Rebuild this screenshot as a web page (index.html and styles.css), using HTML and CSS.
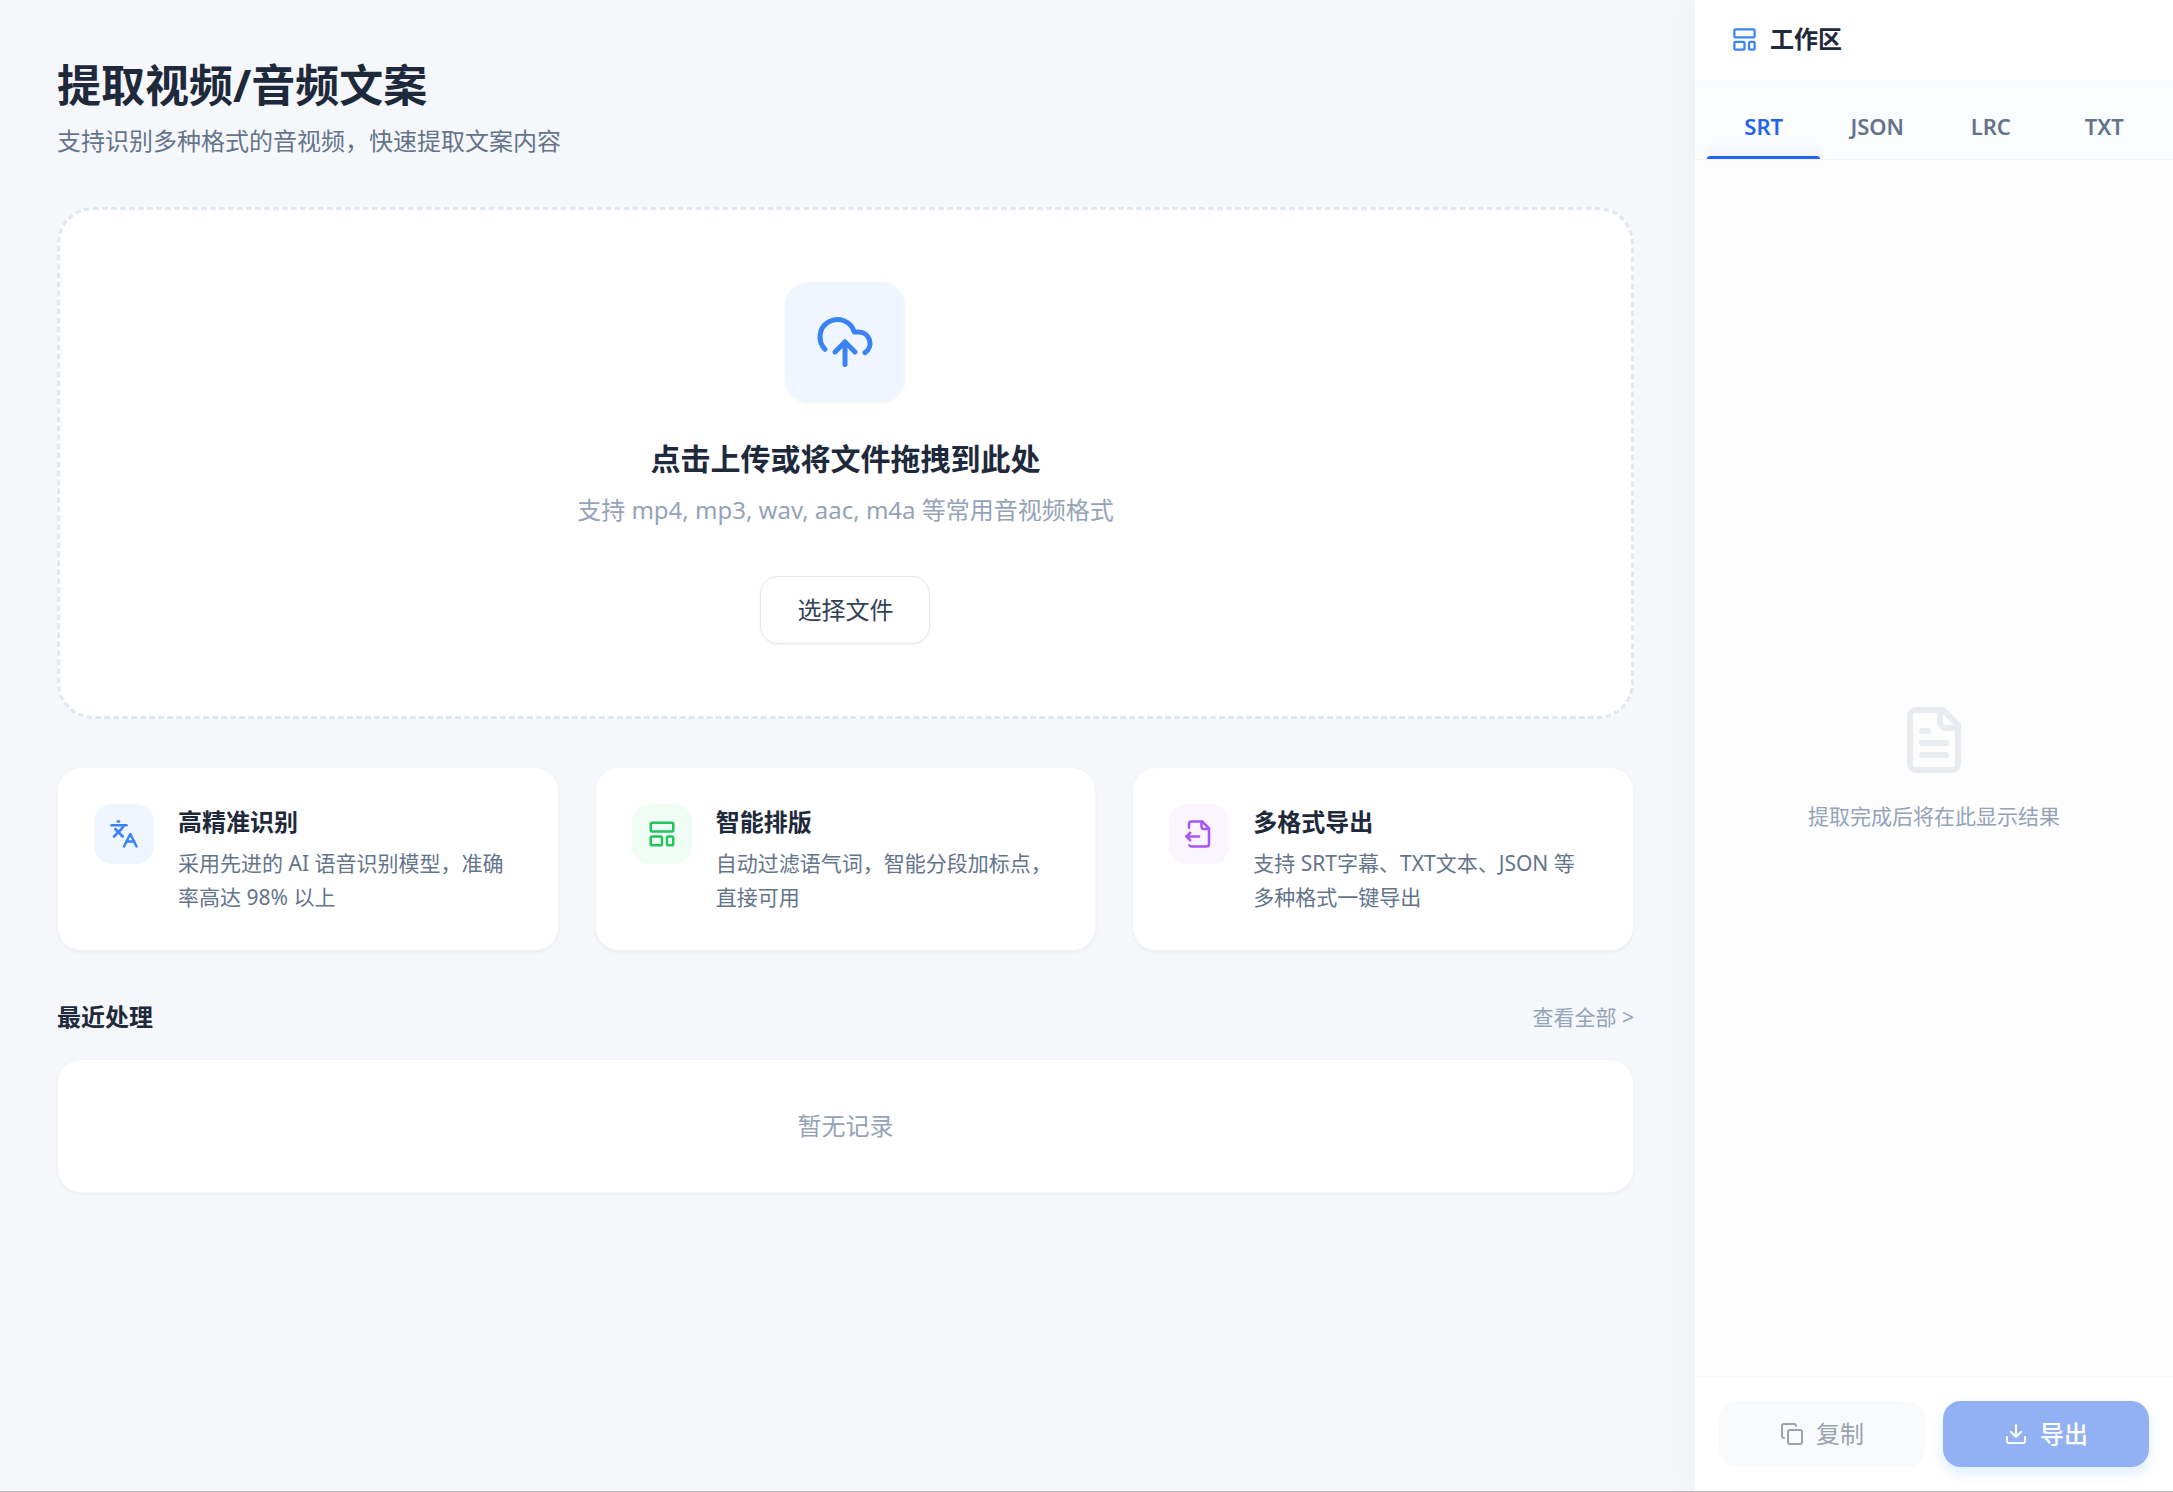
FILE: index.html
```html
<!DOCTYPE html>
<html lang="zh-CN">
  <head>
    <meta charset="UTF-8" />
    <meta name="viewport" content="width=device-width, initial-scale=1.0" />
    <title>提取视频/音频文案</title>
    <link rel="stylesheet" href="styles.css">
  </head>
  <body>
    <main class="main">
      <header class="page-header">
        <h1>提取视频/音频文案</h1>
        <p>支持识别多种格式的音视频，快速提取文案内容</p>
      </header>

      <section class="dropzone">
        <div class="upload-icon">
          <svg class="icon" viewBox="0 0 24 24">
            <path d="M12 12v9" />
            <path d="M4 14.899A7 7 0 1 1 15.71 8h1.79a4.5 4.5 0 0 1 2.5 8.242" />
            <path d="m16 16-4-4-4 4" />
          </svg>
        </div>
        <h2>点击上传或将文件拖拽到此处</h2>
        <p>支持 mp4, mp3, wav, aac, m4a 等常用音视频格式</p>
        <button type="button" class="select-btn">选择文件</button>
      </section>

      <section class="features">
        <article class="card feature">
          <div class="feature-icon blue">
            <svg class="icon" viewBox="0 0 24 24">
              <path d="M2 5h12" />
              <path d="M7 2h1" />
              <path d="m4 14 6-6 2-3" />
              <path d="m5 8 6 6" />
              <path d="m22 22-5-10-5 10" />
              <path d="M14 18h6" />
            </svg>
          </div>
          <div class="feature-text">
            <h3>高精准识别</h3>
            <p>采用先进的 AI 语音识别模型，准确率高达 98% 以上</p>
          </div>
        </article>

        <article class="card feature">
          <div class="feature-icon green">
            <svg class="icon" viewBox="0 0 24 24">
              <rect x="3" y="3" width="18" height="7" rx="1" />
              <rect x="3" y="14" width="9" height="7" rx="1" />
              <rect x="16" y="14" width="5" height="7" rx="1" />
            </svg>
          </div>
          <div class="feature-text">
            <h3>智能排版</h3>
            <p>自动过滤语气词，智能分段加标点，直接可用</p>
          </div>
        </article>

        <article class="card feature">
          <div class="feature-icon purple">
            <svg class="icon" viewBox="0 0 24 24">
              <path d="M14 2v4a2 2 0 0 0 2 2h4" />
              <path d="M4 7V4a2 2 0 0 1 2-2h8.5L20 7.5V20a2 2 0 0 1-2 2H6a2 2 0 0 1-1.7-1" />
              <path d="M2 14h10" />
              <path d="m5 11-3 3 3 3" />
            </svg>
          </div>
          <div class="feature-text">
            <h3>多格式导出</h3>
            <p>支持 SRT字幕、TXT文本、JSON 等多种格式一键导出</p>
          </div>
        </article>
      </section>

      <section class="recent">
        <div class="recent-header">
          <h3>最近处理</h3>
          <a href="#">查看全部 &gt;</a>
        </div>
        <div class="card empty-record">暂无记录</div>
      </section>
    </main>

    <aside class="workspace">
      <header class="workspace-header">
        <svg class="icon" viewBox="0 0 24 24">
          <rect x="3" y="3" width="18" height="7" rx="1" />
          <rect x="3" y="14" width="9" height="7" rx="1" />
          <rect x="16" y="14" width="5" height="7" rx="1" />
        </svg>
        <h2>工作区</h2>
      </header>

      <nav class="tabs">
        <button type="button" class="tab active">SRT</button>
        <button type="button" class="tab">JSON</button>
        <button type="button" class="tab">LRC</button>
        <button type="button" class="tab">TXT</button>
      </nav>

      <div class="result">
        <svg class="icon" viewBox="0 0 24 24">
          <path d="M15 2H6a2 2 0 0 0-2 2v16a2 2 0 0 0 2 2h12a2 2 0 0 0 2-2V7Z" />
          <path d="M14 2v4a2 2 0 0 0 2 2h4" />
          <path d="M10 9H8" />
          <path d="M16 13H8" />
          <path d="M16 17H8" />
        </svg>
        <p>提取完成后将在此显示结果</p>
      </div>

      <footer class="actions">
        <button type="button" class="action copy" disabled>
          <svg class="icon" viewBox="0 0 24 24">
            <rect x="8" y="8" width="14" height="14" rx="2" />
            <path d="M4 16c-1.1 0-2-.9-2-2V4c0-1.1.9-2 2-2h10c1.1 0 2 .9 2 2" />
          </svg>
          复制
        </button>
        <button type="button" class="action export" disabled>
          <svg class="icon" viewBox="0 0 24 24">
            <path d="M21 15v4a2 2 0 0 1-2 2H5a2 2 0 0 1-2-2v-4" />
            <path d="m7 10 5 5 5-5" />
            <path d="M12 15V3" />
          </svg>
          导出
        </button>
      </footer>
    </aside>
  </body>
</html>
```
FILE: styles.css
```css
* {
  margin: 0;
  padding: 0;
  box-sizing: border-box;
}

body {
  display: flex;
  height: 100vh;
  font-family: "Noto Sans", "Noto Sans CJK SC", sans-serif;
  font-size: 24px;
  line-height: 36px;
  color: #1e293b;
  background: #f5f7fb;
  border-bottom: 1px solid #b8b8bc;
}

button {
  font: inherit;
  border: none;
  cursor: pointer;
}

.icon {
  flex-shrink: 0;
  fill: none;
  stroke: currentColor;
  stroke-width: 2;
  stroke-linecap: round;
  stroke-linejoin: round;
}

.main {
  flex: 1;
  min-width: 0;
  padding: 57px 61px 57px 57px;
  overflow: hidden;
}

.page-header {
  margin-bottom: 48px;
}

.page-header h1 {
  font-size: 44px;
  line-height: 57px;
  margin-bottom: 9px;
}

.page-header p {
  color: #64748b;
}

/* upload area */
.dropzone {
  display: flex;
  flex-direction: column;
  align-items: center;
  padding: 72px 24px;
  margin-bottom: 48px;
  text-align: center;
  background: #ffffff;
  border: 3px dashed #e2e8f0;
  border-radius: 36px;
}

.upload-icon {
  display: flex;
  align-items: center;
  justify-content: center;
  width: 120px;
  height: 120px;
  margin-bottom: 36px;
  color: #3b82f6;
  background: #eff6ff;
  border-radius: 24px;
  box-shadow: 0 1px 3px rgba(0, 0, 0, 0.05);
}

.upload-icon .icon {
  width: 60px;
  height: 60px;
}

.dropzone h2 {
  font-size: 30px;
  line-height: 42px;
  margin-bottom: 12px;
}

.dropzone p {
  margin-bottom: 48px;
  color: #94a3b8;
}

.select-btn {
  padding: 15px 36px;
  color: #334155;
  background: #ffffff;
  border: 1px solid #e2e8f0;
  border-radius: 18px;
  box-shadow: 0 1px 3px rgba(0, 0, 0, 0.05);
}

/* cards */
.card {
  background: #ffffff;
  border: 1px solid #f1f5f9;
  border-radius: 24px;
  box-shadow: 0 2px 3px rgba(0, 0, 0, 0.04);
}

.features {
  display: grid;
  grid-template-columns: repeat(3, 1fr);
  gap: 36px;
  margin-bottom: 48px;
}

.feature {
  display: flex;
  align-items: flex-start;
  gap: 24px;
  padding: 36px 40px 36px 36px;
}

.feature-icon {
  display: flex;
  flex-shrink: 0;
  align-items: center;
  justify-content: center;
  width: 60px;
  height: 60px;
  border-radius: 18px;
}

.feature-icon .icon {
  width: 30px;
  height: 30px;
}

.blue {
  color: #3b82f6;
  background: #eff6ff;
}

.green {
  color: #22c55e;
  background: #f0fdf4;
}

.purple {
  color: #a855f7;
  background: #faf5ff;
}

.feature h3,
.recent h3,
.workspace-header h2 {
  font-size: 24px;
  line-height: 36px;
}

.feature h3 {
  margin-bottom: 6px;
}

.feature p {
  font-size: 21px;
  line-height: 34px;
  color: #64748b;
}

.recent-header {
  display: flex;
  align-items: center;
  justify-content: space-between;
  margin-bottom: 24px;
}

.recent-header a {
  font-size: 21px;
  color: #94a3b8;
  text-decoration: none;
}

.empty-record {
  padding: 48px;
  text-align: center;
  color: #94a3b8;
}

/* workspace */
.workspace {
  display: flex;
  flex-direction: column;
  width: 22%;
  background: #ffffff;
  box-shadow: -6px 0 36px rgba(15, 23, 42, 0.03);
}

.workspace-header {
  display: flex;
  align-items: center;
  gap: 12px;
  padding: 21px 36px 23px;
  border-bottom: 1px solid #f8fafc;
}

.workspace-header .icon {
  width: 27px;
  height: 27px;
  color: #3b82f6;
}

.tabs {
  display: flex;
  padding: 0 12px;
  background: #fafcfe;
  border-bottom: 1px solid #f1f5f9;
}

.tab {
  flex: 1;
  padding: 27px 0 12px;
  font-size: 22px;
  font-weight: 600;
  color: #64748b;
  background: none;
}

.tab::after {
  content: "";
  display: block;
  height: 3px;
  margin-bottom: -12px;
  margin-top: 12px;
  border-radius: 3px 3px 0 0;
}

.tab.active {
  color: #2563eb;
}

.tab.active::after {
  background: #2563eb;
  box-shadow: 0 -3px 12px rgba(79, 70, 229, 0.16);
}

.result {
  display: flex;
  flex: 1;
  flex-direction: column;
  align-items: center;
  justify-content: center;
  gap: 24px;
  background: #fdfdfe;
}

.result .icon {
  width: 72px;
  height: 72px;
  color: #e8ecf1;
}

.result p {
  font-size: 21px;
  line-height: 32px;
  color: #94a3b8;
}

.actions {
  display: flex;
  gap: 18px;
  padding: 24px;
  border-top: 1px solid #f1f5f9;
}

.action {
  display: flex;
  flex: 1;
  align-items: center;
  justify-content: center;
  gap: 12px;
  padding: 15px;
  border-radius: 18px;
}

.action .icon {
  width: 24px;
  height: 24px;
}

.copy {
  color: #9ca3af;
  background: #f8fafc;
}

.export {
  font-weight: 500;
  color: #ffffff;
  background: #92b0f4;
  box-shadow: 0 6px 12px rgba(147, 197, 253, 0.3);
}
```
